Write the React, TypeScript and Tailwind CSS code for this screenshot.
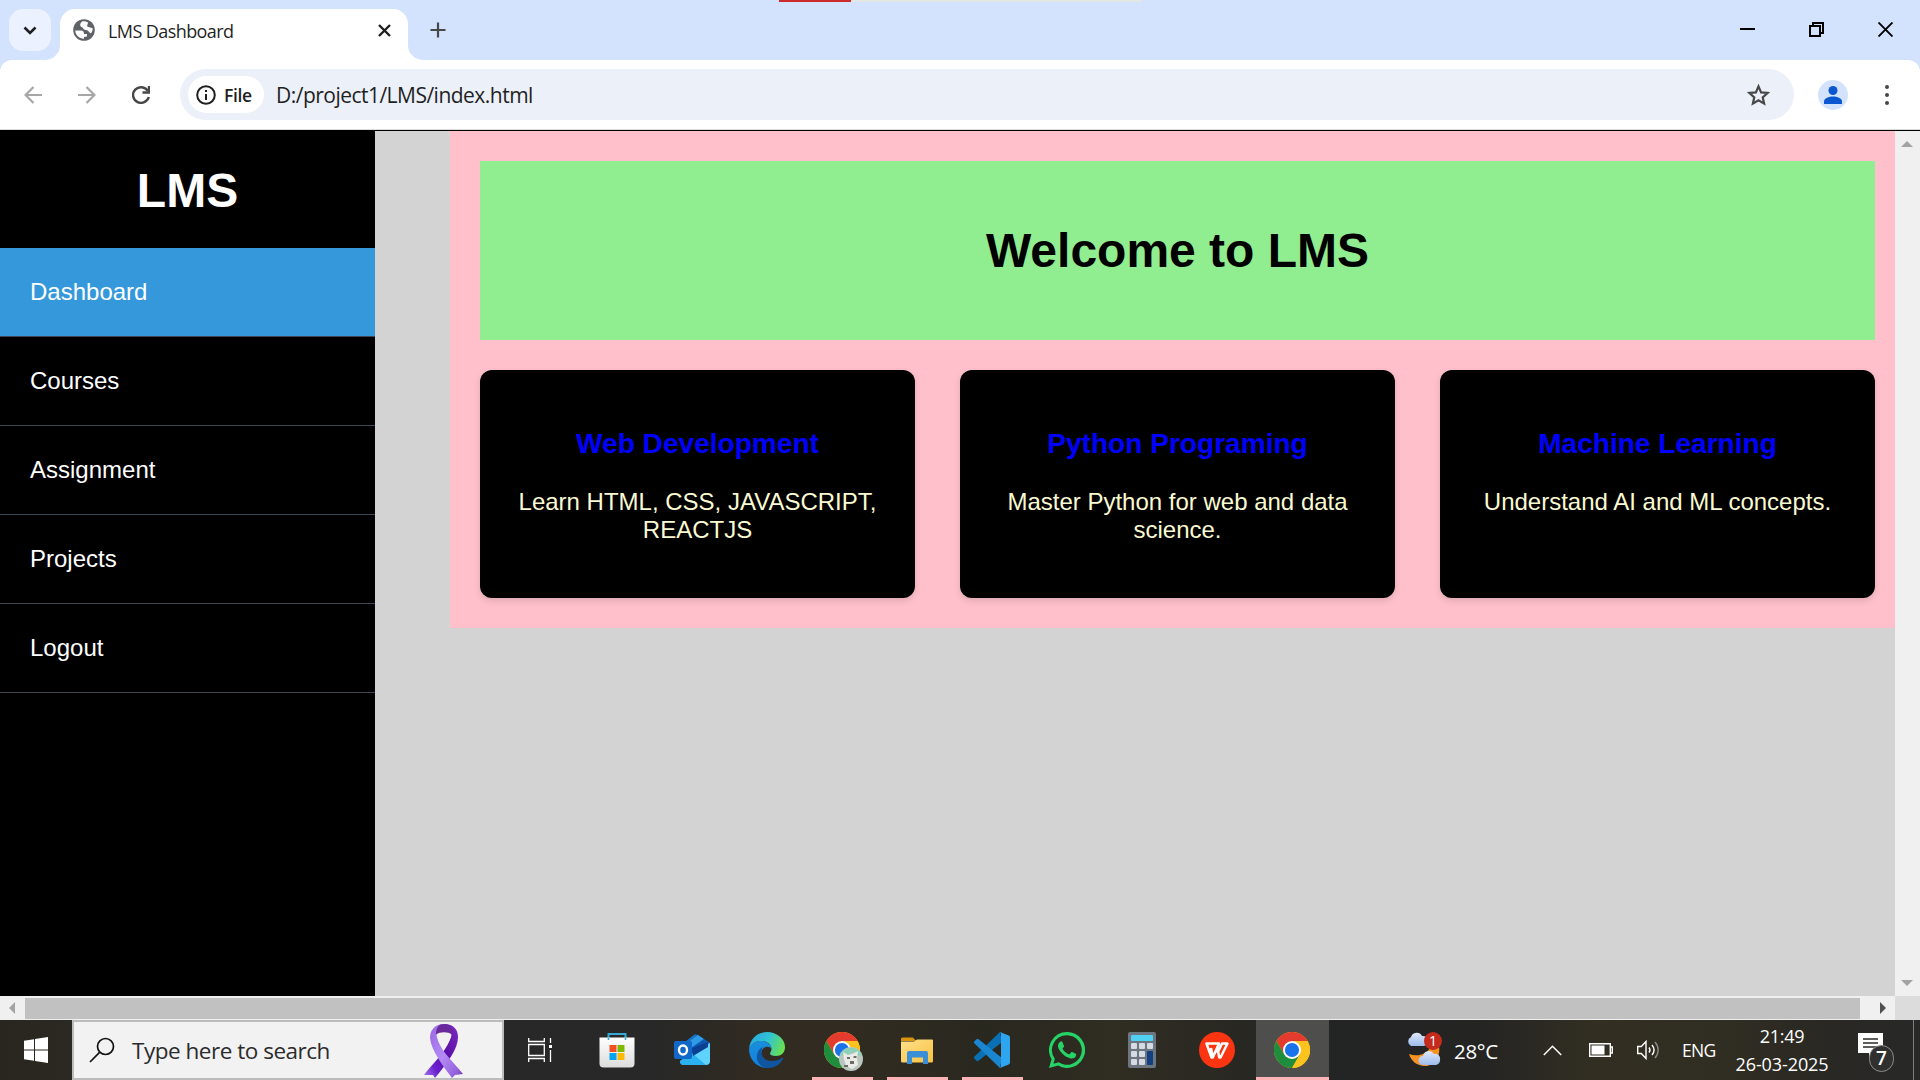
import React from "react";

const ui = "font-['Open_Sans','Noto_Sans',sans-serif]";

const navItems = ["Dashboard", "Courses", "Assignment", "Projects", "Logout"];

const courses = [
  { title: "Web Development", text: "Learn HTML, CSS, JAVASCRIPT, REACTJS" },
  { title: "Python Programing", text: "Master Python for web and data science." },
  { title: "Machine Learning", text: "Understand AI and ML concepts." },
];

function TabStrip() {
  return (
    <div className="relative flex h-[60px] items-start bg-[#d3e2fd]">
      <div className="absolute left-[779px] top-0 flex h-[2px] w-[363px] bg-[#e2e6e4]">
        <div className="w-[72px] bg-[#cd2a2c]" />
      </div>
      <div className="ml-[9px] mt-[9px] flex h-[42px] w-[42px] items-center justify-center rounded-[14px] bg-[#ebf1fe]">
        <svg width="14" height="9" viewBox="0 0 14 9" fill="none" stroke="#1f1f1f" strokeWidth="2.6">
          <path d="M1.500 1.500 7 7l5.500-5.500" />
        </svg>
      </div>
      <div className="relative ml-[9px] mt-[9px] flex h-[51px] w-[348px] items-start rounded-t-[15px] bg-white">
        <svg className="absolute -left-[15px] bottom-0" width="15" height="15" viewBox="0 0 15 15">
          <path d="M15 0v15H0A15 15 0 0 0 15 0Z" fill="#fff" />
        </svg>
        <svg className="absolute -right-[15px] bottom-0" width="15" height="15" viewBox="0 0 15 15">
          <path d="M0 0v15h15A15 15 0 0 1 0 0Z" fill="#fff" />
        </svg>
        <svg className="ml-[13px] mt-[10px]" width="22" height="22" viewBox="0 0 22 22">
          <circle cx="11" cy="11" r="10.800" fill="#5f6368" />
          <path
            d="M2.300 11.500 8 11.500C10 11.500 11 13 11 15L14 15 14 17.500 11 18 11 19.700C6 19.700 2.400 16 2.300 11.500Z M9 2.500C7 4.500 6.500 7 8.500 8 10.500 8 9.500 11 13 11 16 11 15.500 14 18 14.200 19.500 13 19.800 10.500 19.500 9 17 9.200 16.500 7.800 14.500 7.800 13.500 6.500 15 5.500 15 3.600 13 2.300 11 2.100 9 2.500Z"
            fill="#fff"
          />
        </svg>
        <span className={`ml-[13px] mt-[8px] whitespace-nowrap text-[18px] leading-[28px] tracking-[-0.58px] text-[#1f1f1f] ${ui}`}>
          LMS Dashboard
        </span>
        <svg className="ml-auto mr-[17px] mt-[15px]" width="13" height="13" viewBox="0 0 13 13" stroke="#1f1f1f" strokeWidth="2.400">
          <path d="m1 1 11 11M12 1 1 12" />
        </svg>
      </div>
      <svg className="ml-[22px] mt-[22px]" width="16" height="16" viewBox="0 0 16 16" stroke="#474747" strokeWidth="2.200">
        <path d="M8 .5v15M.5 8h15" />
      </svg>
      <div className="ml-auto flex">
        <svg className="mr-[54px] mt-[22px]" width="15" height="15" viewBox="0 0 15 15" stroke="#000" strokeWidth="2">
          <path d="M0 7h15" />
        </svg>
        <svg className="mr-[54px] mt-[22px]" width="15" height="15" viewBox="0 0 15 15" fill="none" stroke="#000" strokeWidth="2">
          <path d="M1 4h10v10H1zM4 4V1h10v10h-3" />
        </svg>
        <svg className="mr-[27px] mt-[22px]" width="15" height="15" viewBox="0 0 15 15" stroke="#000" strokeWidth="1.900">
          <path d="m.5.5 14 14M14.500.5l-14 14" />
        </svg>
      </div>
    </div>
  );
}

function Toolbar() {
  return (
    <div className="bg-[#d3e2fd]">
      <div className="flex h-[69px] items-start rounded-t-[12px] bg-white">
        <svg className="ml-[24px] mt-[26px]" width="18" height="18" viewBox="0 0 18 18" fill="none" stroke="#a6a6a6" strokeWidth="2.200">
          <path d="M18 9H2M9.500 1 1.500 9l8 8" />
        </svg>
        <svg className="ml-[36px] mt-[26px]" width="18" height="18" viewBox="0 0 18 18" fill="none" stroke="#a6a6a6" strokeWidth="2.200">
          <path d="M0 9h16M8.500 1l8 8-8 8" />
        </svg>
        <svg className="ml-[36px] mt-[26px]" width="18" height="18" viewBox="0 0 18 18" fill="none" stroke="#474747" strokeWidth="2.400">
          <path d="M15.800 4.800A8 7.800 0 1 0 16.800 11" />
          <path d="M17 0v6.500h-6.500" />
        </svg>
        <div className="ml-[30px] mt-[9px] flex h-[51px] w-[1614px] items-center rounded-full bg-[#ecf0f9]">
          <div className="ml-[8px] flex h-[37px] w-[76px] items-center rounded-full bg-white">
            <svg className="ml-[8px]" width="20" height="20" viewBox="0 0 20 20" fill="none" stroke="#1f1f1f" strokeWidth="2">
              <circle cx="10" cy="10" r="8.800" />
              <path d="M10 9v6M10 5v2" />
            </svg>
            <span className={`ml-[8px] text-[17.500px] font-semibold leading-[24px] tracking-[-0.4px] text-[#1f1f1f] ${ui}`}>File</span>
          </div>
          <span className={`ml-[12px] whitespace-nowrap text-[21px] leading-[28px] tracking-[-0.52px] text-[#1f1f1f] ${ui}`}>
            D:/project1/LMS/index.html
          </span>
          <svg className="ml-auto mr-[24px]" width="23" height="22" viewBox="0 0 23 22" fill="none" stroke="#474747" strokeWidth="2.200">
            <path d="m11.500 2.400 2.600 6 6.500.6-4.900 4.300 1.400 6.300-5.600-3.300-5.600 3.300 1.400-6.300L2.400 9l6.500-.6z" />
          </svg>
        </div>
        <div className="ml-[24px] mt-[20px] flex h-[30px] w-[30px] justify-center rounded-full bg-[#d3e3fd]">
          <svg className="mt-[6px]" width="18" height="18" viewBox="0 0 18 18" fill="#0b57d0">
            <circle cx="9" cy="4.500" r="4.500" />
            <path d="M0 18v-2.500C0 12 5 10.500 9 10.500s9 1.500 9 5V18z" />
          </svg>
        </div>
        <svg className="ml-[37px] mt-[24px]" width="4" height="22" viewBox="0 0 4 22" fill="#474747">
          <circle cx="2" cy="3" r="2" />
          <circle cx="2" cy="11" r="2" />
          <circle cx="2" cy="19" r="2" />
        </svg>
      </div>
      <div className="h-px bg-[#dcdcdc]" />
    </div>
  );
}

function Page() {
  return (
    <div className="flex h-[866px] border-t border-black bg-[#d3d3d3] font-['Liberation_Sans',Arial,sans-serif]">
      <aside className="w-[375px] shrink-0 bg-black text-white">
        <h2 className="flex h-[117px] items-center justify-center pt-[2px] text-[48px] font-bold leading-[55px]">LMS</h2>
        <ul>
          {navItems.map((item, i) => (
            <li
              key={item}
              className={`flex h-[89px] items-center border-b border-[#3d4852] px-[30px] pb-px text-[24px] leading-[27px] ${
                i === 0 ? "bg-[#3498db]" : ""
              }`}
            >
              {item}
            </li>
          ))}
        </ul>
      </aside>
      <main className="ml-[75px] w-[1445px] shrink-0 self-start bg-[#ffc0cb] py-[30px] pl-[30px] pr-[20px]">
        <h1 className="flex h-[179px] items-center justify-center bg-[#90ee90] text-[48px] font-bold leading-[55px] text-black">
          Welcome to LMS
        </h1>
        <div className="mt-[30px] grid grid-cols-3 gap-[45px]">
          {courses.map((c) => (
            <div
              key={c.title}
              className="h-[228px] rounded-[12px] bg-black px-[30px] pt-[58px] text-center shadow-[0_3px_7px_rgba(0,0,0,0.12)]"
            >
              <h3 className="text-[28.080px] font-bold leading-[32px] text-[#0000ff]">{c.title}</h3>
              <p className="mt-[28px] text-[24px] leading-[28px] text-[#fafad2]">{c.text}</p>
            </div>
          ))}
        </div>
      </main>
      <div className="flex flex-1 flex-col items-center justify-between bg-[#f0f0f0] py-[10px] pr-px">
        <svg width="12" height="6" viewBox="0 0 12 6" fill="#a3a3a3"><path d="M0 6 6 0l6 6z" /></svg>
        <svg width="12" height="6" viewBox="0 0 12 6" fill="#a3a3a3"><path d="M0 0h12L6 6z" /></svg>
      </div>
    </div>
  );
}

function HorizontalScrollbar() {
  return (
    <div className="flex h-[24px] items-center bg-[#f0f0f0]">
      <div className="flex w-[25px] justify-center pr-px">
        <svg width="6" height="12" viewBox="0 0 6 12" fill="#a3a3a3"><path d="M6 0v12L0 6z" /></svg>
      </div>
      <div className="h-[21px] w-[1835px] bg-[#c1c1c1]" />
      <div className="flex w-[35px] justify-end pr-[9px]">
        <svg width="6" height="12" viewBox="0 0 6 12" fill="#505050"><path d="M0 0v12l6-6z" /></svg>
      </div>
      <div className="h-full flex-1 bg-[#dcdcdc]" />
    </div>
  );
}

function Ribbon() {
  return (
    <svg width="40" height="54" viewBox="0 0 40 54">
      <defs>
        <linearGradient id="ribbonDark" x1="1" y1="0" x2="0" y2="1">
          <stop offset="0" stopColor="#7a2cc0" />
          <stop offset="0.45" stopColor="#5b0fa8" />
          <stop offset="0.75" stopColor="#6a1fd0" />
          <stop offset="1" stopColor="#a67bf0" />
        </linearGradient>
        <linearGradient id="ribbonLight" x1="0" y1="0" x2="1" y2="1">
          <stop offset="0" stopColor="#9a68e0" />
          <stop offset="0.5" stopColor="#b48af5" />
          <stop offset="0.85" stopColor="#9461dc" />
          <stop offset="1" stopColor="#7030b0" />
        </linearGradient>
      </defs>
      <path d="M20 0C30 0 34 6 34 13 34 25 24 38 11 54L9 51 0 51C10 38 26 24 27 10z" fill="url(#ribbonDark)" />
      <path d="M20 0C10 0 6 7 6 14 7 26 19 42 28 54l3-3 8-1C29 37 13 24 13 10z" fill="url(#ribbonLight)" />
      <path d="M20 8.500c-3.500 0-6 1-7.500 2C13 16 16.500 20 20 23.500 23.500 20 27 16 27.500 10.500 26 9.500 23.500 8.500 20 8.500z" fill="#f2f2f2" />
      <path d="M20 0c-5 0-8 3-8 10.500 4-3 12-3 16 0C28 3 25 0 20 0z" fill="#6a2a9c" />
    </svg>
  );
}

function ChromeIcon() {
  return (
    <svg width="36" height="36" viewBox="0 0 36 36">
      <circle cx="18" cy="18" r="18" fill="#fbbc04" />
      <path d="M18 9h15.600A18 18 0 0 0 2.400 9l7.800 13.500z" fill="#e33b2e" />
      <path d="M2.400 9A18 18 0 0 0 18 36l7.800-13.500L18 27l-7.800-4.500z" fill="#1e8e3e" />
      <path d="M18 36A18 18 0 0 0 33.600 9H18l7.800 13.500z" fill="#fcc31e" />
      <circle cx="18" cy="18" r="9" fill="#fff" />
      <circle cx="18" cy="18" r="7.100" fill="#1a73e8" />
    </svg>
  );
}

function StoreIcon() {
  return (
    <svg width="36" height="36" viewBox="0 0 36 36">
      <defs>
        <linearGradient id="bag" x1="0" y1="0" x2="0" y2="1">
          <stop offset="0" stopColor="#fff" />
          <stop offset="1" stopColor="#dcdcdc" />
        </linearGradient>
      </defs>
      <path d="M9.500 8V2h17v6" fill="none" stroke="#35a9d8" strokeWidth="2" />
      <path d="M.5 5.500h35v26a4 4 0 0 1-4 4h-27a4 4 0 0 1-4-4z" fill="url(#bag)" />
      <path d="M9.500 8V5.500M26.500 8V5.500" stroke="#35a9d8" strokeWidth="1.600" />
      <path d="M10.500 13h7v7h-7z" fill="#f25022" />
      <path d="M18.500 13h7v7h-7z" fill="#7fba00" />
      <path d="M10.500 21h7v7h-7z" fill="#00a4ef" />
      <path d="M18.500 21h7v7h-7z" fill="#ffb900" />
    </svg>
  );
}

function OutlookIcon() {
  return (
    <svg width="36" height="32" viewBox="0 0 36 32">
      <path d="M6 12 20 .8a3 3 0 0 1 3 0L36 9v8L12 28H8z" fill="#1670c4" />
      <path d="M12 10 24 1l6 4-16 12z" fill="#2f9be6" />
      <path d="m17 14 13-9 4 3v5L18 21z" fill="#0f57b0" />
      <path d="M20 20 36 9v18a4 4 0 0 1-4 4H10a4 4 0 0 1-4-4z" fill="#5fd3fb" />
      <path d="m6 27 12-8 14 12H10a4 4 0 0 1-4-4z" fill="#2bb2ee" />
      <path d="M18 14 34 8v5l-15 9z" fill="#0b3f93" />
      <rect y="7" width="18" height="18" rx="2" fill="#1268c8" />
      <ellipse cx="9" cy="16" rx="4" ry="4.500" fill="none" stroke="#fff" strokeWidth="2.400" />
    </svg>
  );
}

function EdgeIcon() {
  return (
    <svg width="36" height="36" viewBox="0 0 36 36">
      <defs>
        <linearGradient id="edgeTop" x1="0" y1="0.3" x2="1" y2="0.6">
          <stop offset="0" stopColor="#2aa8e0" />
          <stop offset="0.5" stopColor="#31c4d3" />
          <stop offset="1" stopColor="#6be04a" />
        </linearGradient>
        <linearGradient id="edgeSide" x1="0" y1="0" x2="0" y2="1">
          <stop offset="0" stopColor="#1a8fdc" />
          <stop offset="1" stopColor="#1180dc" />
        </linearGradient>
      </defs>
      <path d="M0 17C1 6 9 0 18 0c10 0 18 7 18 15 0 6-4 9-9 9-4 0-6-1-6-2.500 0-1 1.500-2 1.500-4.500C22 11 16 9 12 9 6 9 2 12 0 17z" fill="url(#edgeTop)" />
      <path d="M0 17c2-6 7-8 12-8 6 0 10 4 10.500 7.500-2-2.500-8-3-10 3C10 28 16 36 22 35.500 9 38 0 28 0 17z" fill="url(#edgeSide)" />
      <path d="M14 15c-4 5 0 14 8 14 5 0 8-1 11-3 1-.5 1.500 0 1 1-3 6-9 9-15 9C11 36 7 29 8 23c.500-4 3-7 6-8z" fill="#10559f" />
    </svg>
  );
}

function FolderIcon() {
  return (
    <svg width="32" height="27" viewBox="0 0 32 27">
      <defs>
        <linearGradient id="folder" x1="0" y1="0" x2="1" y2="1">
          <stop offset="0" stopColor="#ffe08a" />
          <stop offset="1" stopColor="#f8c244" />
        </linearGradient>
      </defs>
      <path d="M0 2a1.500 1.500 0 0 1 1.500-1.500H12L15 4H0z" fill="#d9960d" />
      <path d="M0 4.500h13l3-2h15a1 1 0 0 1 1 1V24a1.500 1.500 0 0 1-1.500 1.500h-29A1.500 1.500 0 0 1 0 24z" fill="url(#folder)" />
      <path d="M6 27V16a2 2 0 0 1 2-2h17a2 2 0 0 1 2 2v11h-5v-6.500H11V27z" fill="#3b8fd6" />
    </svg>
  );
}

function VsCodeIcon() {
  return (
    <svg width="36" height="36" viewBox="0 0 36 36">
      <path d="M26 0 0.500 24.500a1.600 1.600 0 0 0 0 2.300l2 1.900a1.600 1.600 0 0 0 2.100 0L28 10z" fill="#0a70b4" />
      <path d="M26 36 0.500 11.500a1.600 1.600 0 0 1 0-2.300l2-1.900a1.600 1.600 0 0 1 2.100 0L28 26z" fill="#1a86cf" />
      <path d="m26 0 8.700 3.500A2.200 2.200 0 0 1 36 5.500v25a2.200 2.200 0 0 1-1.300 2L26 36l1-2V2z" fill="#2fa5f0" />
    </svg>
  );
}

function WhatsAppIcon() {
  return (
    <svg width="36" height="36" viewBox="0 0 24 24" fill="#25d366">
      <path d="M17.472 14.382c-.297-.149-1.758-.867-2.030-.967-.273-.099-.471-.148-.670.150-.197.297-.767.966-.940 1.164-.173.199-.347.223-.644.075-.297-.150-1.255-.463-2.390-1.475-.883-.788-1.480-1.761-1.653-2.059-.173-.297-.018-.458.130-.606.134-.133.298-.347.446-.520.149-.174.198-.298.298-.497.099-.198.050-.371-.025-.520-.075-.149-.669-1.612-.916-2.207-.242-.579-.487-.500-.669-.510-.173-.008-.371-.010-.570-.010-.198 0-.520.074-.792.372-.272.297-1.040 1.016-1.040 2.479 0 1.462 1.065 2.875 1.213 3.074.149.198 2.096 3.200 5.077 4.487.709.306 1.262.489 1.694.625.712.227 1.360.195 1.871.118.571-.085 1.758-.719 2.006-1.413.248-.694.248-1.289.173-1.413-.074-.124-.272-.198-.570-.347z" />
      <path
        fillRule="evenodd"
        d="M12 0A12 12 0 0 0 1.700 18.100L0 24l6.100-1.600A12 12 0 1 0 12 0zm0 2.100a9.900 9.900 0 1 1-5.600 18.100L3 21.100 3.900 17.800A9.900 9.900 0 0 1 12 2.100z"
      />
    </svg>
  );
}

function CalculatorIcon() {
  return (
    <svg width="28" height="36" viewBox="0 0 28 36">
      <rect width="28" height="36" rx="2" fill="#6d7680" />
      <rect x="3" y="3" width="22" height="6" rx="1" fill="#4fd0f2" />
      <g fill="#d6dbe3">
        <rect x="3" y="11" width="6" height="6" rx="1" />
        <rect x="11" y="11" width="6" height="6" rx="1" />
        <rect x="19" y="11" width="6" height="6" rx="1" />
        <rect x="3" y="19" width="6" height="6" rx="1" />
        <rect x="11" y="19" width="6" height="6" rx="1" />
        <rect x="3" y="27" width="6" height="6" rx="1" />
        <rect x="11" y="27" width="6" height="6" rx="1" />
      </g>
      <rect x="19" y="19" width="6" height="14" rx="1" fill="#123f80" />
    </svg>
  );
}

function WpsIcon() {
  return (
    <svg width="36" height="36" viewBox="0 0 36 36">
      <circle cx="18" cy="18" r="18" fill="#fb3412" />
      <path
        d="M12 16l1.800 9.500L20 11.500H7.500l5 14h1.300M18.300 16.500l2 9h1.200l7-14H23L18.500 21"
        fill="none"
        stroke="#fff"
        strokeWidth="2.500"
        strokeLinejoin="round"
      />
    </svg>
  );
}

function Slot({ children, running, active }: { children: React.ReactNode; running?: boolean; active?: boolean }) {
  return (
    <div className={`flex w-[75px] ${active ? "pl-[2px]" : "pl-[8px]"}`}>
      <div
        className={`flex h-[60px] shrink-0 items-center justify-center border-b-[3px] pr-px ${active ? "w-[73px] bg-[#4e4e4d]" : "w-[61px]"} ${
          running || active ? "border-[#ffb3b6]" : "border-transparent"
        }`}
      >
        <div className="pb-px pt-1">{children}</div>
      </div>
    </div>
  );
}

function Weather() {
  return (
    <div className="relative h-[36px] w-[38px]">
      <svg width="38" height="36" viewBox="0 0 38 36">
        <defs>
          <linearGradient id="cloud" x1="0" y1="0" x2="0" y2="1">
            <stop offset="0" stopColor="#dfe9fb" />
            <stop offset="1" stopColor="#9dbbec" />
          </linearGradient>
        </defs>
        <path d="M3 22c8 3 18 1 22-8h8c2 12-6 20-14 20C11 34 5 29 3 22z" fill="#f59222" />
        <path d="M5 14a5 5 0 0 1 0-9 6 6 0 0 1 11-1 5 5 0 0 1 6 5 5 5 0 0 1-4 5z" fill="url(#cloud)" />
        <path d="M17 33a4.500 4.500 0 0 1 0-9 6 6 0 0 1 11-2 5 5 0 0 1 6 6 5 5 0 0 1-4 5z" fill="url(#cloud)" />
      </svg>
      <div className={`absolute left-[18px] top-0 flex h-[18px] w-[18px] items-center justify-center rounded-full bg-[#c42b1c] text-[14px] leading-none text-white ${ui}`}>
        1
      </div>
    </div>
  );
}

function Taskbar() {
  return (
    <div className="flex h-[60px] bg-[linear-gradient(90deg,#29261f_0%,#2b2923_4%,#272827_27%,#272827_34%,#322b21_40%,#302b21_46%,#29281f_51%,#302d22_58%,#2a2922_63%,#232424_68%,#242423_77%,#322e22_83%,#302d22_90%,#292823_95%,#282828_100%)]">
      <div className="flex w-[72px] items-center justify-center">
        <svg width="24" height="26" viewBox="0 0 24 24" preserveAspectRatio="none" fill="#fff">
          <path d="M0 3.400 10 2v9.500H0zM11 1.800 24 0v11.500H11zM0 12.500h10V22L0 20.600zM11 12.500h13V24l-13-1.800z" />
        </svg>
      </div>
      <div className="flex w-[432px] items-center border-2 border-[#bcbcbc] bg-[#f2f2f2]">
        <svg className="ml-[15px]" width="26" height="26" viewBox="0 0 26 26" fill="none" stroke="#111" strokeWidth="1.700">
          <circle cx="16.500" cy="9.500" r="8" />
          <path d="M10.800 15.200 1 25" />
        </svg>
        <span className={`ml-[17px] whitespace-nowrap pt-[2px] text-[22.500px] leading-[30px] tracking-[-0.48px] text-[#2b2b2b] ${ui}`}>
          Type here to search
        </span>
        <div className="ml-auto mr-[38px] pt-px">
          <Ribbon />
        </div>
      </div>
      <div className="flex w-[75px] items-center">
        <svg className="ml-[24px]" width="25" height="24" viewBox="0 0 25 24" fill="none" stroke="#fff" strokeWidth="1.300">
          <path d="M.7 0v3.500h15.600V0M.7 6.500h15.600v11H.7zM.7 24v-3.500h15.600V24M22.500 0v5M22.500 12v12" />
          <path d="M21 7h3v3h-3z" fill="#fff" stroke="none" />
        </svg>
      </div>
      <Slot><StoreIcon /></Slot>
      <Slot><OutlookIcon /></Slot>
      <Slot><EdgeIcon /></Slot>
      <Slot running>
        <div className="relative">
          <ChromeIcon />
          <svg className="absolute -right-[3px] -bottom-[3px]" width="24" height="24" viewBox="0 0 24 24">
            <circle cx="12" cy="12" r="12" fill="#b9c6bf" />
            <path d="M1 8A12 12 0 0 1 23 8c-4 3-5-2-9-2S6 11 1 8z" fill="#8fd0b9" />
            <path d="M4 5l5 3 4-1 6-3-1 8 1 6-6 4-6-3-2-7z" fill="#eceae6" />
            <path d="M8 10h3v2H8zM14.500 9h3v2h-3zM11 14h4v3h-4zM5 18h4v2H5z" fill="#6b6c69" />
          </svg>
        </div>
      </Slot>
      <Slot running><FolderIcon /></Slot>
      <Slot running><VsCodeIcon /></Slot>
      <Slot><WhatsAppIcon /></Slot>
      <Slot><CalculatorIcon /></Slot>
      <Slot><WpsIcon /></Slot>
      <Slot active><ChromeIcon /></Slot>
      <div className={`flex flex-1 items-center text-[#fff] ${ui}`}>
        <div className="ml-[77px]">
          <Weather />
        </div>
        <span className="ml-[10px] w-[89px] whitespace-nowrap pt-px text-[20.500px] leading-[28px] tracking-[-0.3px]">28°C</span>
        <svg width="19" height="11" viewBox="0 0 19 11" fill="none" stroke="#fff" strokeWidth="1.500">
          <path d="m.8 10 8.700-8.700 8.700 8.700" />
        </svg>
        <svg className="ml-[27px]" width="24" height="14" viewBox="0 0 24 14" fill="none" stroke="#fff" strokeWidth="1.400">
          <path d="M.7.7h20.600v12.600H.7z" />
          <path d="M22 4h1.300v6H22" />
          <path d="M2.500 2.500h13v9h-13z" fill="#fff" stroke="none" />
        </svg>
        <svg className="ml-[24px]" width="23" height="20" viewBox="0 0 23 20" fill="none" stroke="#fff" strokeWidth="1.400">
          <path d="M.7 6.500h3.600L9 1.500v17l-4.700-5H.7z" />
          <path d="M12 7.500c1.200 1.500 1.200 3.500 0 5M15 5c2.500 3 2.500 7 0 10" />
          <path d="M18 2c4.200 4.700 4.200 11.300 0 16" stroke="#8a8a88" />
        </svg>
        <span className="ml-[22px] w-[34px] whitespace-nowrap text-[17.500px] leading-[24px] tracking-[-0.7px]">ENG</span>
        <div className="ml-[16px] flex w-[100px] flex-col items-center whitespace-nowrap text-[18px] leading-[28px]">
          <span className="tracking-[-0.3px]">21:49</span>
          <span className="tracking-[-0.1px]">26-03-2025</span>
        </div>
        <div className="relative ml-[26px] h-[40px] w-[38px]">
          <svg className="mt-[3px]" width="25" height="28" viewBox="0 0 25 28">
            <path d="M0 0h25v20h-9l-5 5v-5H0z" fill="#fff" />
            <path d="M5 6h15M5 10h15M5 14h15" stroke="#2b2a25" strokeWidth="1.300" />
          </svg>
          <div className="absolute left-[11px] top-[15px] flex h-[27px] w-[25px] items-center justify-center rounded-full border border-[#8d8d8b] bg-[#30302e] text-[19px] font-semibold leading-none">
            7
          </div>
        </div>
        <div className="ml-auto mr-[6px] h-full w-px bg-[#7d7d7b]" />
      </div>
    </div>
  );
}

export default function App() {
  return (
    <div className="flex h-[1080px] w-[1920px] flex-col overflow-hidden bg-white">
      <TabStrip />
      <Toolbar />
      <Page />
      <HorizontalScrollbar />
      <Taskbar />
    </div>
  );
}
